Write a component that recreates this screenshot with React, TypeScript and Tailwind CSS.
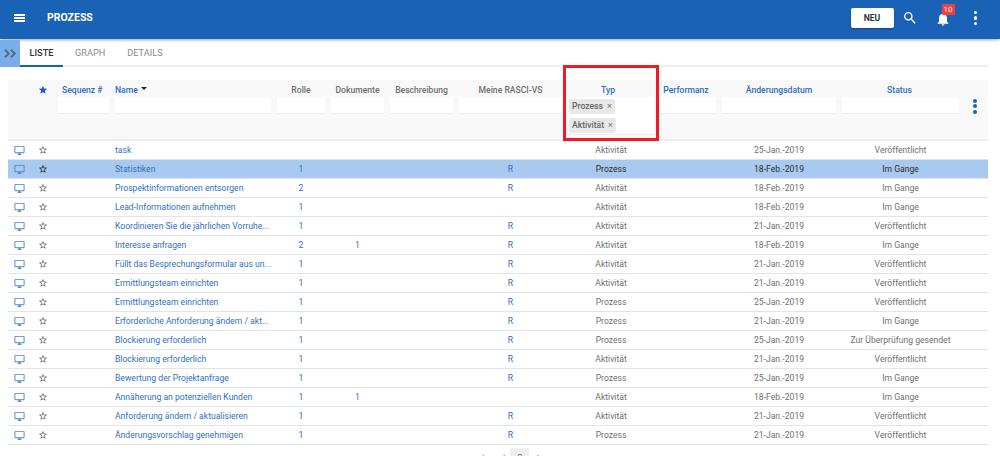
type Row = {
  name: string;
  rolle?: string;
  dok?: string;
  rasci?: string;
  typ: string;
  datum: string;
  status: string;
  selected?: boolean;
};

const rows: Row[] = [
  { name: "task", typ: "Aktivität", datum: "25-Jan.-2019", status: "Veröffentlicht" },
  { name: "Statistiken", rolle: "1", rasci: "R", typ: "Prozess", datum: "18-Feb.-2019", status: "Im Gange", selected: true },
  { name: "Prospektinformationen entsorgen", rolle: "2", rasci: "R", typ: "Aktivität", datum: "18-Feb.-2019", status: "Im Gange" },
  { name: "Lead-Informationen aufnehmen", rolle: "1", typ: "Aktivität", datum: "18-Feb.-2019", status: "Im Gange" },
  { name: "Koordinieren Sie die jährlichen Vorruhe...", rolle: "1", rasci: "R", typ: "Aktivität", datum: "21-Jan.-2019", status: "Veröffentlicht" },
  { name: "Interesse anfragen", rolle: "2", dok: "1", rasci: "R", typ: "Aktivität", datum: "18-Feb.-2019", status: "Im Gange" },
  { name: "Füllt das Besprechungsformular aus un...", rolle: "1", rasci: "R", typ: "Aktivität", datum: "21-Jan.-2019", status: "Veröffentlicht" },
  { name: "Ermittlungsteam einrichten", rolle: "1", rasci: "R", typ: "Aktivität", datum: "21-Jan.-2019", status: "Veröffentlicht" },
  { name: "Ermittlungsteam einrichten", rolle: "1", rasci: "R", typ: "Prozess", datum: "25-Jan.-2019", status: "Veröffentlicht" },
  { name: "Erforderliche Anforderung ändern / akt...", rolle: "1", rasci: "R", typ: "Prozess", datum: "21-Jan.-2019", status: "Im Gange" },
  { name: "Blockierung erforderlich", rolle: "1", rasci: "R", typ: "Prozess", datum: "25-Jan.-2019", status: "Zur Überprüfung gesendet" },
  { name: "Blockierung erforderlich", rolle: "1", rasci: "R", typ: "Aktivität", datum: "21-Jan.-2019", status: "Veröffentlicht" },
  { name: "Bewertung der Projektanfrage", rolle: "1", rasci: "R", typ: "Prozess", datum: "25-Jan.-2019", status: "Im Gange" },
  { name: "Annäherung an potenziellen Kunden", rolle: "1", dok: "1", typ: "Aktivität", datum: "18-Feb.-2019", status: "Im Gange" },
  { name: "Anforderung ändern / aktualisieren", rolle: "1", rasci: "R", typ: "Aktivität", datum: "21-Jan.-2019", status: "Veröffentlicht" },
  { name: "Änderungsvorschlag genehmigen", rolle: "1", rasci: "R", typ: "Prozess", datum: "21-Jan.-2019", status: "Veröffentlicht" },
];

const gridCols = "grid grid-cols-[23px_24px_57px_162px_54px_59px_69px_109px_92px_62px_120px_123px_26px]";

const starBorder =
  "M22 9.24l-7.19-.62L12 2 9.19 8.63 2 9.24l5.46 4.73L5.82 21 12 17.27 18.18 21l-1.63-7.03L22 9.24zM12 15.4l-3.76 2.27 1-4.28-3.32-2.88 4.38-.38L12 6.1l1.71 4.04 4.38.38-3.32 2.88 1 4.28L12 15.4z";
const starFilled = "M12 17.27L18.18 21l-1.63-7.03L22 9.24l-7.19-.61L12 2 9.19 8.63 2 9.24l5.46 4.73L5.82 21z";

function Icon({ d, className }: { d: string; className: string }) {
  return (
    <svg viewBox="0 0 24 24" fill="currentColor" className={className}>
      <path d={d} />
    </svg>
  );
}

function Kebab({ dot, gap }: { dot: string; gap: string }) {
  return (
    <div className={`flex flex-col ${gap}`}>
      <span className={`rounded-full ${dot}`} />
      <span className={`rounded-full ${dot}`} />
      <span className={`rounded-full ${dot}`} />
    </div>
  );
}

function HeadCell({ label, blue, extra }: { label: string; blue?: boolean; extra?: string }) {
  return (
    <div className="px-[3px]">
      <div
        className={`flex h-[17px] items-center pt-[3px] text-[8.6px] font-medium ${extra ?? "justify-center"} ${
          blue ? "text-[#2f6fc0]" : "text-[#6f6f6f]"
        }`}
      >
        {label}
      </div>
      <div className="h-[17px] border-b border-[#eeeeee] bg-white" />
    </div>
  );
}

function Chip({ label }: { label: string }) {
  return (
    <span className="flex h-[15px] w-fit items-center gap-[4px] rounded-[2px] bg-[#e8e8e8] px-[3px] text-[8.6px] font-medium text-[#666666]">
      {label}
      <span className="text-[9px] leading-none text-[#888888]">×</span>
    </span>
  );
}

export default function App() {
  return (
    <div className="relative h-[456px] w-[1000px] overflow-hidden bg-white font-['Roboto',sans-serif]">
      {/* Kopfzeile */}
      <header className="flex h-[39px] items-center bg-[#1a62b6] pb-[3px] pl-[14px] pr-[23px] shadow-[0_1px_3px_rgba(0,0,0,0.35)]">
        <div className="flex w-[11px] flex-col gap-[1.5px]">
          <span className="h-[1.5px] bg-white" />
          <span className="h-[1.5px] bg-white" />
          <span className="h-[1.5px] bg-white" />
        </div>
        <span className="ml-[22px] text-[10.5px] font-bold text-white">PROZESS</span>
        <button className="ml-auto h-[20px] w-[43px] rounded-[2px] bg-white text-[8.6px] font-bold text-[#333333] shadow-[0_1px_2px_rgba(0,0,0,0.3)]">
          NEU
        </button>
        <Icon
          d="M15.5 14h-.79l-.28-.27C15.41 12.59 16 11.11 16 9.5 16 5.91 13.09 3 9.5 3S3 5.91 3 9.5 5.91 16 9.5 16c1.61 0 3.09-.59 4.23-1.57l.27.28v.79l5 4.99L20.49 19l-4.99-5zm-6 0C7.01 14 5 11.99 5 9.5S7.01 5 9.5 5 14 7.01 14 9.5 11.99 14 9.5 14z"
          className="ml-[8px] h-[16px] w-[16px] text-white"
        />
        <div className="relative ml-[17px] mt-[2px]">
          <Icon
            d="M12 22c1.1 0 2-.9 2-2h-4c0 1.1.89 2 2 2zm6-6v-5c0-3.07-1.64-5.64-4.5-6.32V4c0-.83-.67-1.5-1.5-1.5s-1.5.67-1.5 1.5v.68C7.63 5.36 6 7.92 6 11v5l-2 2v1h16v-1l-2-2z"
            className="h-[16px] w-[16px] text-white"
          />
          <span className="absolute -top-[7px] left-[7px] flex h-[11px] w-[13px] items-center justify-center rounded-[1px] bg-[#f04040] text-[8px] text-white">
            10
          </span>
        </div>
        <div className="ml-[23px]">
          <Kebab dot="h-[3.5px] w-[3.5px] bg-white" gap="gap-[2px]" />
        </div>
      </header>

      {/* Reiter */}
      <div className="flex">
        <div className="mt-[1px] flex h-[27px] w-[20px] items-center justify-center bg-[#7aaeea] text-[#4f6a8a]">
          <svg viewBox="0 0 13 9" className="h-[9px] w-[13px]" fill="none" stroke="currentColor" strokeWidth="2">
            <path d="M1 .8l3.7 3.7L1 8.2M7 .8l3.7 3.7L7 8.2" />
          </svg>
        </div>
        <div className="mt-[1px] flex h-[27px] w-[968px] items-center border-b-2 border-[#eeeeee] text-[9.2px]">
          <div className="-mb-[2px] flex h-[27px] w-[43px] items-center justify-center border-b-2 border-[#1a62b6] font-medium text-[#333333]">
            LISTE
          </div>
          <div className="ml-[12px] text-[#8a8a8a]">GRAPH</div>
          <div className="ml-[22px] text-[#8a8a8a]">DETAILS</div>
        </div>
      </div>

      {/* Tabelle */}
      <div className="ml-[8px] mt-[13px] w-[980px]">
        <div className={`${gridCols} h-[61px] items-start border-b-2 border-[#eeeeee] bg-[#f8f8f8]`}>
          <div />
          <div className="flex h-[17px] items-center justify-center pt-[3px]">
            <Icon d={starFilled} className="h-[10px] w-[10px] text-[#1a62b6]" />
          </div>
          <HeadCell label="Sequenz #" blue extra="justify-start pl-[4px]" />
          <div className="px-[3px]">
            <div className="flex h-[17px] items-center pt-[3px] text-[8.6px] font-medium text-[#2f6fc0]">
              Name
              <span className="mb-[3px] ml-[3px] h-0 w-0 border-x-[3px] border-t-[3px] border-x-transparent border-t-[#222222]" />
            </div>
            <div className="h-[17px] border-b border-[#eeeeee] bg-white" />
          </div>
          <HeadCell label="Rolle" />
          <HeadCell label="Dokumente" />
          <HeadCell label="Beschreibung" />
          <HeadCell label="Meine RASCI-VS" />
          <div className="px-[3px]">
            <div className="flex h-[17px] items-center justify-center pr-[6px] pt-[3px] text-[8.6px] font-medium text-[#2f6fc0]">
              Typ
            </div>
            <div className="flex h-[38px] flex-col gap-[4px] border-b border-[#eeeeee] bg-white pl-[1px] pt-[2px]">
              <Chip label="Prozess" />
              <Chip label="Aktivität" />
            </div>
          </div>
          <HeadCell label="Performanz" blue extra="justify-center pr-[4px]" />
          <HeadCell label="Änderungsdatum" blue />
          <HeadCell label="Status" blue extra="justify-center pr-[2px]" />
          <div className="flex h-[52px] items-center justify-center">
            <Kebab dot="h-[4px] w-[4px] bg-[#1a62b6]" gap="gap-[1.5px]" />
          </div>
        </div>

        {rows.map((row, i) => (
          <div
            key={i}
            className={`${gridCols} h-[19px] items-center border-b border-[#e4e4e4] text-[8.6px] ${
              row.selected ? "bg-[#a9caf0] text-[#2a2a2a]" : "text-[#6f6f6f]"
            }`}
          >
            <div className="flex justify-center">
              <Icon
                d="M21 2H3c-1.1 0-2 .9-2 2v12c0 1.1.9 2 2 2h7v2H8v2h8v-2h-2v-2h7c1.1 0 2-.9 2-2V4c0-1.1-.9-2-2-2zm0 14H3V4h18v12z"
                className="h-[11px] w-[11px] text-[#4a82c8]"
              />
            </div>
            <div className="flex justify-center">
              <Icon d={starBorder} className={`h-[10px] w-[10px] ${row.selected ? "text-[#222222]" : "text-[#666666]"}`} />
            </div>
            <div />
            <div className="whitespace-nowrap pl-[3px] text-[#2f6fc0]">{row.name}</div>
            <div className="text-center text-[#2f6fc0]">{row.rolle}</div>
            <div className="text-center text-[#2f6fc0]">{row.dok}</div>
            <div />
            <div className="text-center text-[#2f6fc0]">{row.rasci}</div>
            <div className="text-center">{row.typ}</div>
            <div />
            <div className="text-center">{row.datum}</div>
            <div className="text-center">{row.status}</div>
            <div />
          </div>
        ))}

        {/* Seitennavigation, unten abgeschnitten */}
        <div className="mt-[3px] flex items-start text-[9px] text-[#777777]">
          <span className="ml-[474px] pt-[4px] leading-none">‹</span>
          <span className="ml-[18px] pt-[4px] leading-none">‹</span>
          <span className="ml-[5px] flex h-[20px] w-[19px] justify-center rounded-[2px] bg-[#eeeeee] pt-[4px]">2</span>
          <span className="ml-[7px] pt-[4px] leading-none">›</span>
        </div>
      </div>

      {/* Rote Markierung */}
      <div className="absolute left-[563px] top-[65px] h-[76px] w-[96px] border-[3px] border-[#ed1c24]" />
    </div>
  );
}
